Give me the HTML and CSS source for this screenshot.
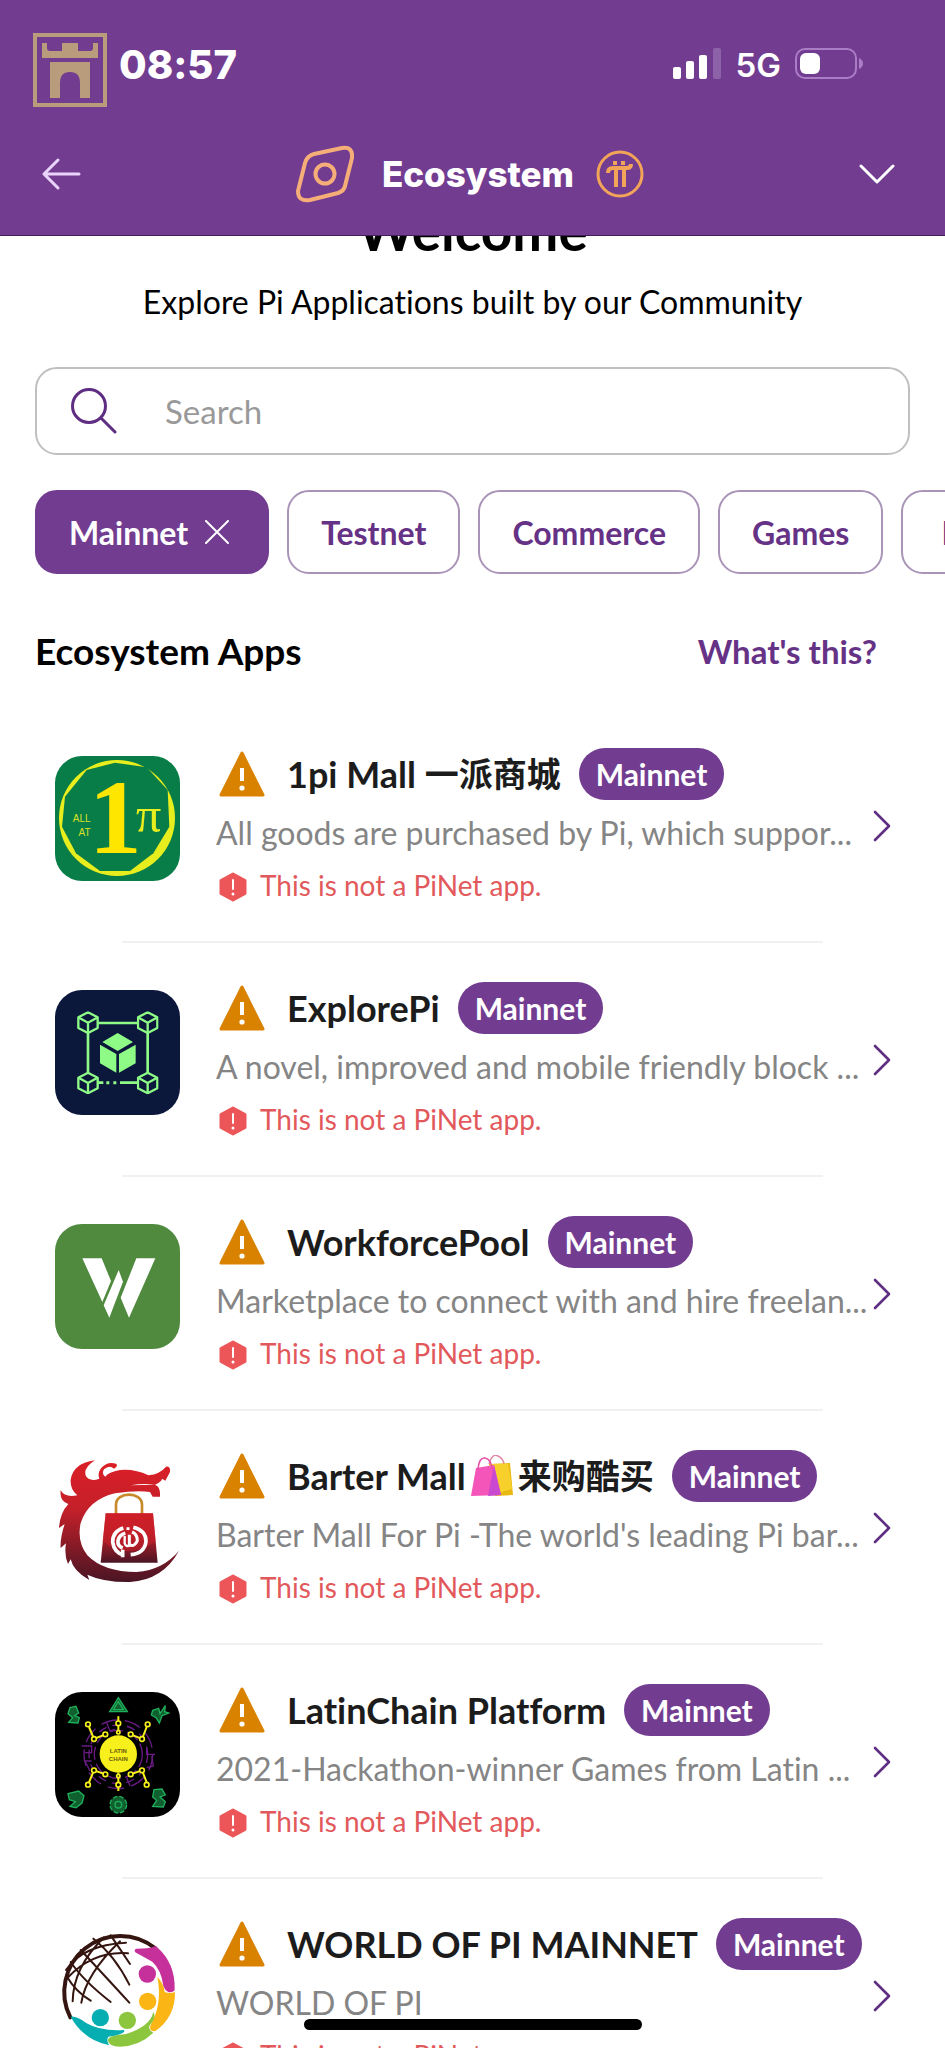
FILE: index.html
```html
<!DOCTYPE html>
<html lang="en">
<head>
  <meta charset="UTF-8">
  <meta name="viewport" content="width=device-width, initial-scale=1.0">
  <title>Ecosystem</title>
  <link rel="stylesheet" href="styles.css">
</head>
<body>
  <!-- shared icons -->
  <svg class="sprite" aria-hidden="true">
    <symbol id="warning" viewBox="0 0 46 46">
      <path d="M23 2 44 44H2Z" fill="#d98200" stroke="#d98200" stroke-width="3" stroke-linejoin="round"/>
      <path d="M21 17h4v13h-4z" fill="#fff"/>
      <circle cx="23" cy="37" r="2.6" fill="#fff"/>
    </symbol>
    <symbol id="alert" viewBox="0 0 28 30">
      <path d="M14 2 26 8.500V21.500L14 28 2 21.500V8.500Z" fill="#ec5659" stroke="#ec5659" stroke-width="3" stroke-linejoin="round"/>
      <path d="M14 8v9" stroke="#fff" stroke-width="2" stroke-linecap="round"/>
      <circle cx="14" cy="22" r="1.500" fill="#fff"/>
    </symbol>
    <symbol id="chevron" viewBox="0 0 18 32">
      <path d="M2 2 16 16 2 30" fill="none" stroke="#5f2d82" stroke-width="2.600" stroke-linecap="round" stroke-linejoin="round"/>
    </symbol>
    <symbol id="cube" viewBox="-32 -34 64 68">
      <path d="M0-31 29-16V16L0 31-29 16V-16Z" fill="#0c173c" stroke="#8dfb86" stroke-width="7" stroke-linejoin="round"/>
      <path d="M-27-15 0 0 27-15M0 0V29" fill="none" stroke="#8dfb86" stroke-width="7"/>
    </symbol>
  </svg>

  <header class="header">
    <div class="status">
      <svg class="castle" viewBox="0 0 74 74" fill="#b99c7b">
        <path d="M0 0h74v74H0zM4 4v66h66V4z" fill-rule="evenodd"/>
        <path d="M9 10h5v5q0 3 3 3h12v-8h16v8h12q3 0 3-3v-5h5v15H9z"/>
        <path d="M17 29h40v36H47V50q0-11-10-11T27 50v15H17z"/>
      </svg>
      <span class="clock">08:57</span>
      <svg class="signal" viewBox="0 0 48 32" fill="#fff">
        <rect x="0" y="19" width="8" height="12" rx="2"/>
        <rect x="13" y="13" width="8" height="18" rx="2"/>
        <rect x="26" y="7" width="8" height="24" rx="2"/>
        <rect x="40" y="0" width="8" height="31" rx="2" fill="#8d62a8"/>
      </svg>
      <span class="network">5G</span>
      <svg class="battery" viewBox="0 0 68 32">
        <rect x="1" y="1" width="60" height="29" rx="9" fill="none" stroke="#ab7dc6" stroke-width="2"/>
        <rect x="5" y="5" width="20" height="21" rx="6" fill="#fff"/>
        <path d="M64 10q4 2 4 5.500T64 21z" fill="#ab7dc6"/>
      </svg>
    </div>
    <nav class="nav">
      <button class="icon-button" aria-label="Back">
        <svg width="40" height="34" viewBox="0 0 40 34" fill="none" stroke="#ecd3fb" stroke-width="3" stroke-linecap="round" stroke-linejoin="round">
          <path d="M38 17H3M17 3 3 17l14 14"/>
        </svg>
      </button>
      <div class="brand">
        <svg width="58" height="58" viewBox="0 0 58 58" fill="none" stroke="#f6ae79" stroke-width="4">
          <path d="M18 9 46 3Q57 1 56 13L49 41Q48 46 42 48L14 55Q2 57 2 46L9 18Q11 11 18 9Z"/>
          <circle cx="29" cy="29" r="9.500"/>
        </svg>
        <h1 class="brand-name">Ecosystem</h1>
        <svg width="48" height="48" viewBox="0 0 48 48" fill="none" stroke="#f2a559" stroke-width="3">
          <circle cx="24" cy="24" r="22"/>
          <path d="M12 23q0-5 5-5h14q4 0 4-4M20 19v18M28 19v18" stroke-width="4"/>
          <path d="M17 13h4M25 13h4" stroke-width="4"/>
        </svg>
      </div>
      <button class="icon-button" aria-label="Menu">
        <svg width="36" height="22" viewBox="0 0 36 22" fill="none" stroke="#fff" stroke-width="3" stroke-linecap="round" stroke-linejoin="round">
          <path d="M2 3 18 19 34 3"/>
        </svg>
      </button>
    </nav>
  </header>

  <main class="main">
    <h2 class="welcome">Welcome</h2>
    <p class="intro">Explore Pi Applications built by our Community</p>

    <label class="search">
      <svg width="46" height="46" viewBox="0 0 46 46" fill="none" stroke="#5f2d82" stroke-width="3" stroke-linecap="round">
        <circle cx="18" cy="18" r="16.500"/>
        <path d="M30 30 44 44"/>
      </svg>
      <input type="text" placeholder="Search" aria-label="Search">
    </label>

    <div class="chips">
      <button class="chip active">Mainnet
        <svg width="24" height="24" viewBox="0 0 24 24" stroke="#fff" stroke-width="2" stroke-linecap="round"><path d="M1 1 23 23M23 1 1 23"/></svg>
      </button>
      <button class="chip">Testnet</button>
      <button class="chip">Commerce</button>
      <button class="chip">Games</button>
      <button class="chip chip-last">Education</button>
    </div>

    <div class="section-head">
      <h3>Ecosystem Apps</h3>
      <a href="#">What's this?</a>
    </div>

    <ul class="apps">
      <li class="app">
        <a class="app-link" href="#">
          <svg class="app-icon" viewBox="45 78 375 375">
            <path d="M45 78h375v375H45z" fill="#087d47"/>
            <circle cx="231" cy="264" r="174" fill="#e8ee1e"/>
            <path d="M225 98 320 112 383 180 388 290 340 370 270 423 180 423 108 370 66 290 75 200 140 120Z" fill="#087d47"/>
            <text class="logo-one" x="226" y="370">1</text>
            <text class="logo-pi" x="326" y="307">π</text>
            <text class="logo-small" x="152" y="275">ALL</text>
            <text class="logo-small" x="152" y="318">AT</text>
          </svg>
          <div class="app-body">
            <div class="app-title">
              <svg class="warning"><use href="#warning"/></svg>
              <span class="app-name">1pi Mall&nbsp;<span class="zh">一派商城</span></span>
              <span class="badge">Mainnet</span>
            </div>
            <p class="app-desc">All goods are purchased by Pi, which suppor...</p>
            <p class="app-note"><svg class="alert"><use href="#alert"/></svg>This is not a PiNet app.</p>
          </div>
          <svg class="chevron"><use href="#chevron"/></svg>
        </a>
      </li>

      <li class="app">
        <a class="app-link" href="#">
          <svg class="app-icon" viewBox="45 778 375 375">
            <path d="M45 778h375v375H45z" fill="#0c173c"/>
            <path d="M144 877H323V1056H240M190 1056H174M144 877V1056" fill="none" stroke="#8dfb86" stroke-width="8"/>
            <path d="M199 1056h9M220 1056h9" stroke="#8dfb86" stroke-width="9"/>
            <use href="#cube" x="111" y="842" width="66" height="68"/>
            <use href="#cube" x="290" y="842" width="66" height="68"/>
            <use href="#cube" x="111" y="1023" width="66" height="68"/>
            <use href="#cube" x="290" y="1023" width="66" height="68"/>
            <path d="M233 907 279 934 233 961 187 934ZM180 942 229 970V1026L180 998ZM287 942 237 970V1026L287 998Z" fill="#8dfb86"/>
          </svg>
          <div class="app-body">
            <div class="app-title">
              <svg class="warning"><use href="#warning"/></svg>
              <span class="app-name">ExplorePi</span>
              <span class="badge">Mainnet</span>
            </div>
            <p class="app-desc">A novel, improved and mobile friendly block ...</p>
            <p class="app-note"><svg class="alert"><use href="#alert"/></svg>This is not a PiNet app.</p>
          </div>
          <svg class="chevron"><use href="#chevron"/></svg>
        </a>
      </li>

      <li class="app">
        <a class="app-link" href="#">
          <svg class="app-icon" viewBox="45 69 375 375">
            <path d="M45 69h375v375H45z" fill="#4f8a3f"/>
            <path d="M127 172H185L213 240 187 303ZM236 207 249 242 208 350 191 313ZM289 172H346L267 350 242 290Z" fill="#fff"/>
          </svg>
          <div class="app-body">
            <div class="app-title">
              <svg class="warning"><use href="#warning"/></svg>
              <span class="app-name">WorkforcePool</span>
              <span class="badge">Mainnet</span>
            </div>
            <p class="app-desc">Marketplace to connect with and hire freelan...</p>
            <p class="app-note"><svg class="alert"><use href="#alert"/></svg>This is not a PiNet app.</p>
          </div>
          <svg class="chevron"><use href="#chevron"/></svg>
        </a>
      </li>

      <li class="app">
        <a class="app-link" href="#">
          <svg class="app-icon" viewBox="45 770 375 375">
            <defs>
              <linearGradient id="dragon" x1="0" y1="0" x2="0" y2="1">
                <stop offset="0" stop-color="#dc1f26"/>
                <stop offset=".4" stop-color="#c4202a"/>
                <stop offset="1" stop-color="#4a1524"/>
              </linearGradient>
            </defs>
            <path d="M165 777Q100 785 92 835Q90 865 112 882Q75 890 62 867Q58 900 85 908Q60 935 57 980L74 968Q60 1010 62 1040L78 1026Q72 1060 84 1088L92 1074Q100 1110 148 1136L142 1120Q190 1143 270 1142Q370 1135 417 1048Q370 1105 290 1112Q190 1112 142 1062Q110 1020 122 965Q145 895 225 876Q290 866 330 872L338 886L360 886Q362 855 345 850L272 852Q310 845 345 850Q366 840 366 832L376 838L390 812Q392 794 378 796Q360 818 325 822Q285 802 240 806Q205 812 196 826Q184 818 192 804Q208 790 222 802Q236 794 228 787Q200 780 182 802Q172 816 178 832Q150 842 138 825Q128 800 165 777Z" fill="url(#dragon)"/>
            <path d="M228 940V910C228 870 306 870 306 910V940" fill="none" stroke="#c98a2b" stroke-width="8"/>
            <path d="M197 936H339L353 1084H182Z" fill="url(#dragon)"/>
            <path d="M197 936H339L347 1020 Q260 1080 188 1020Z" fill="#c4202a" opacity=".6"/>
            <g fill="none" stroke="#fff" stroke-width="11">
              <path d="M250 980Q218 990 218 1022Q222 1054 252 1062M280 978Q318 988 318 1020Q314 1056 272 1060M248 1068V1045M248 1040Q232 1034 234 1018Q238 1000 256 996"/>
              <path d="M268 1000V1030Q284 1038 292 1018Q292 998 276 992M264 978V986" stroke-width="9"/>
              <path d="M254 1004V1026Q258 1038 270 1032" stroke-width="7"/>
            </g>
          </svg>
          <div class="app-body">
            <div class="app-title">
              <svg class="warning"><use href="#warning"/></svg>
              <span class="app-name">Barter Mall<svg class="bags" viewBox="0 0 44 42" role="img" aria-label="shopping bags">
                <path d="M19 9Q22-2 28 1T34 10" fill="none" stroke="#e08aa8" stroke-width="1.500"/>
                <path d="M19 9 40 8 43 40 25 41Z" fill="#e9b913"/>
                <path d="M20 9 38 9 40 20 42 34 28 38Z" fill="#f7d02c"/>
                <path d="M6 13 24 10 31 40 1 41Z" fill="#f355b8"/>
                <path d="M24 10 31 40 18 41Z" fill="#c94ad0"/>
                <path d="M8 15Q9 2 15 3T22 14" fill="none" stroke="#e64fa5" stroke-width="1.500"/>
              </svg><span class="zh">来购酷买</span></span>
              <span class="badge">Mainnet</span>
            </div>
            <p class="app-desc">Barter Mall For Pi -The world's leading Pi bar...</p>
            <p class="app-note"><svg class="alert"><use href="#alert"/></svg>This is not a PiNet app.</p>
          </div>
          <svg class="chevron"><use href="#chevron"/></svg>
        </a>
      </li>

      <li class="app">
        <a class="app-link" href="#">
          <svg class="app-icon" viewBox="45 63 375 375">
            <path d="M45 63h375v375H45z" fill="#000"/>
            <g fill="none" stroke="#6a1b86" stroke-width="4">
              <circle cx="235" cy="250" r="72" stroke-dasharray="40 12"/>
              <circle cx="235" cy="250" r="88" stroke-dasharray="26 18"/>
              <circle cx="235" cy="250" r="103" stroke-dasharray="50 22"/>
              <path d="M125 225h30v20h-20M345 250h-25v-20M200 155l10 25 15-5M270 345l-10-25M150 300l-15-30h20M320 290l20-5-5-30"/>
            </g>
            <g fill="none" stroke="#f7f01c" stroke-width="6">
              <path d="M235 136V190M235 305V360M147 168 162 204 196 190M320 168 306 204 272 190M147 334 162 298 196 310M320 334 306 298 272 310"/>
              <g fill="#000" stroke-width="5">
                <circle cx="235" cy="157" r="7"/><circle cx="235" cy="184" r="5"/><circle cx="144" cy="160" r="7"/><circle cx="162" cy="204" r="7"/><circle cx="196" cy="190" r="7"/>
                <circle cx="323" cy="160" r="7"/><circle cx="306" cy="204" r="7"/><circle cx="272" cy="190" r="7"/>
                <circle cx="235" cy="341" r="7"/><circle cx="235" cy="315" r="5"/><circle cx="144" cy="341" r="7"/><circle cx="162" cy="298" r="7"/><circle cx="196" cy="310" r="7"/>
                <circle cx="320" cy="341" r="7"/><circle cx="306" cy="298" r="7"/><circle cx="272" cy="310" r="7"/>
              </g>
            </g>
            <circle cx="235" cy="249" r="56" fill="#f7f01c"/>
            <text class="logo-latin" x="235" y="246">LATIN</text>
            <text class="logo-latin" x="235" y="271">CHAIN</text>
            <g fill="#10602f" stroke="#1fb05c" stroke-width="4">
              <path d="M235 80 262 122H209ZM235 92 250 116H220Z"/>
              <path d="M90 110 108 106 116 126 104 134 118 140 114 156 86 154 98 140 84 128Z"/>
              <path d="M338 118 356 112 360 128 376 104 374 122 386 126 366 134 358 156 348 140 334 132Z"/>
              <path d="M84 368 116 360 132 374 126 396 108 410 90 406 106 392 88 386Z"/>
              <path d="M342 356 366 354 376 372 360 378 376 392 370 408 338 406 350 388 338 378Z"/>
              <circle cx="235" cy="401" r="25" stroke-dasharray="14 6"/><circle cx="235" cy="401" r="10"/>
            </g>
          </svg>
          <div class="app-body">
            <div class="app-title">
              <svg class="warning"><use href="#warning"/></svg>
              <span class="app-name">LatinChain Platform</span>
              <span class="badge">Mainnet</span>
            </div>
            <p class="app-desc">2021-Hackathon-winner Games from Latin ...</p>
            <p class="app-note"><svg class="alert"><use href="#alert"/></svg>This is not a PiNet app.</p>
          </div>
          <svg class="chevron"><use href="#chevron"/></svg>
        </a>
      </li>

      <li class="app">
        <a class="app-link" href="#">
          <svg class="app-icon" viewBox="45 76 375 375">
            <g fill="none" stroke="#35150f" stroke-linecap="round">
              <path d="M91 350A168 168 0 0 1 346 143" stroke-width="12"/>
              <path d="M78 208Q128 132 258 126M82 232Q160 150 264 158M98 302Q100 200 192 110M124 306Q138 220 240 122" stroke-width="6"/>
              <path d="M212 104Q240 145 270 190M160 114Q225 165 268 252M122 148Q180 210 268 306M92 184Q130 240 212 304M78 224Q108 275 152 300" stroke-width="6"/>
            </g>
            <path d="M290 150Q325 150 346 143Q400 190 398 266Q385 275 376 255Q370 205 340 178Z" fill="#c5309b" stroke="#c5309b" stroke-width="12" stroke-linejoin="round"/>
            <path d="M352 228Q372 250 374 274Q390 280 405 274Q406 350 345 392Q325 392 332 372Q368 310 352 228Z" fill="#fbb615"/>
            <path d="M340 334Q330 378 258 400Q202 404 204 420Q206 436 240 438Q300 435 340 396Q320 384 332 370Q350 350 340 334Z" fill="#8cc63e"/>
            <path d="M92 348Q110 345 140 368Q180 392 252 388Q260 400 205 408Q198 420 208 434Q130 418 92 348Z" fill="#06aeb1"/>
            <circle cx="322" cy="220" r="26" fill="#c5309b"/>
            <circle cx="323" cy="302" r="26" fill="#fbb615"/>
            <circle cx="262" cy="359" r="26" fill="#8cc63e"/>
            <circle cx="181" cy="351" r="26" fill="#06aeb1"/>
          </svg>
          <div class="app-body">
            <div class="app-title">
              <svg class="warning"><use href="#warning"/></svg>
              <span class="app-name">WORLD OF PI MAINNET</span>
              <span class="badge">Mainnet</span>
            </div>
            <p class="app-desc">WORLD OF PI</p>
            <p class="app-note"><svg class="alert"><use href="#alert"/></svg>This is not a PiNet app.</p>
          </div>
          <svg class="chevron"><use href="#chevron"/></svg>
        </a>
      </li>
    </ul>
  </main>

  <div class="home-bar"></div>
</body>
</html>
```

FILE: styles.css
```css
* {
  box-sizing: border-box;
}
body {
  margin: 0;
  height: 100vh;
  display: flex;
  flex-direction: column;
  overflow: hidden;
  background-color: #fff;
  color: #000;
  font-family: Lato, "Noto Sans CJK SC", sans-serif;
  font-variant-ligatures: none;
}
h1, h2, h3, p, ul {
  margin: 0;
  padding: 0;
}
a {
  text-decoration: none;
}
button {
  font-family: inherit;
  cursor: pointer;
}
.sprite {
  position: absolute;
  width: 0;
  height: 0;
}

/* header */
.header {
  flex: none;
  z-index: 1;
  padding-top: 33px;
  background-color: #723c91;
  border-bottom: 1px solid #41205a;
  color: #fff;
  font-family: Inter, sans-serif;
}
.status {
  display: flex;
  align-items: center;
  height: 74px;
  padding: 0 82px 0 33px;
}
.castle {
  width: 74px;
  height: 74px;
}
.clock {
  margin-left: 12px;
  margin-right: auto;
  padding-bottom: 10px;
  font-size: 40px;
  line-height: 40px;
  font-weight: 800;
}
.signal {
  width: 48px;
  height: 32px;
  margin-bottom: 12px;
}
.network {
  margin: 0 14px 10px 15px;
  font-size: 33px;
  line-height: 40px;
  font-weight: 600;
}
.battery {
  width: 68px;
  height: 32px;
  margin-bottom: 12px;
}
.nav {
  display: flex;
  align-items: center;
  justify-content: space-between;
  height: 128px;
  padding: 6px 50px 0 41px;
}
.icon-button {
  display: flex;
  padding: 0;
  border: 0;
  background: none;
}
.brand {
  display: flex;
  align-items: center;
}
.brand-name {
  margin: 0 22px 0 28px;
  font-size: 35px;
  line-height: 40px;
  font-weight: 800;
}

/* content */
.main {
  flex: 1;
  min-height: 0;
  overflow: hidden;
}
.welcome {
  margin-top: -36px;
  font-size: 55px;
  line-height: 60px;
  font-weight: 700;
  text-align: center;
}
.intro {
  margin-top: 22px;
  font-size: 32px;
  line-height: 40px;
  text-align: center;
}
.search {
  display: flex;
  align-items: center;
  height: 88px;
  margin: 45px 35px 0;
  padding: 0 34px;
  border: 2px solid #c0c0c0;
  border-radius: 22px;
}
.search svg {
  flex: none;
}
.search input {
  flex: 1;
  margin-left: 48px;
  padding: 0;
  border: 0;
  outline: 0;
  background: none;
  font-family: inherit;
  font-size: 33px;
}
.search input::placeholder {
  color: #999;
}
.chips {
  display: flex;
  gap: 18px;
  margin-top: 35px;
  padding-left: 35px;
  overflow: hidden;
}
.chip {
  flex: none;
  display: flex;
  align-items: center;
  gap: 17px;
  height: 84px;
  padding: 0 32px;
  border: 2px solid #a994b8;
  border-radius: 22px;
  background-color: #fff;
  color: #663286;
  font-size: 32px;
  font-weight: 700;
}
.chip.active {
  padding-right: 38px;
  border-color: #723c91;
  background-color: #723c91;
  color: #fff;
}
.chip-last {
  padding-left: 38px;
}
.section-head {
  display: flex;
  align-items: center;
  justify-content: space-between;
  margin-top: 55px;
  padding: 0 68px 0 35px;
  line-height: 44px;
}
.section-head h3 {
  font-size: 37px;
  font-weight: 700;
}
.section-head a {
  color: #663286;
  font-size: 33px;
  font-weight: 700;
}

/* app list */
.apps {
  margin-top: 36px;
  list-style: none;
}
.app::after {
  content: "";
  display: block;
  height: 2px;
  margin: 0 122px;
  background-color: #f1f1f1;
}
.app-link {
  display: flex;
  align-items: center;
  padding: 38px 54px 36px 55px;
  color: #1c1c1c;
}
.app-icon {
  flex: none;
  align-self: flex-start;
  width: 125px;
  height: 125px;
  margin: 9px 36px 0 0;
  border-radius: 27px;
}
.app-body {
  flex: 1;
  min-width: 0;
  white-space: nowrap;
}
.app-title {
  display: flex;
  align-items: center;
  height: 54px;
}
.warning {
  flex: none;
  width: 46px;
  height: 46px;
  margin: 0 22px 0 3px;
}
.app-name {
  display: flex;
  align-items: center;
  font-size: 36px;
  line-height: 54px;
  font-weight: 700;
}
.zh {
  font-size: 34px;
}
.bags {
  width: 44px;
  height: 42px;
  margin: 0 4px;
}
.badge {
  margin-left: 18px;
  padding: 0 17px;
  border-radius: 26px;
  background-color: #723c91;
  color: #fff;
  font-size: 30px;
  line-height: 52px;
  font-weight: 700;
}
.app-desc {
  margin-top: 10px;
  color: #858585;
  font-size: 32px;
  line-height: 44px;
}
.app-note {
  display: flex;
  align-items: center;
  margin-top: 10px;
  color: #e2595c;
  font-size: 28px;
  line-height: 40px;
}
.alert {
  width: 28px;
  height: 30px;
  margin: 4px 13px 0 3px;
}
.chevron {
  flex: none;
  width: 18px;
  height: 32px;
}

/* lettering inside the logos */
.logo-one {
  fill: #ffe600;
  font: 700 318px "Liberation Serif", serif;
  text-anchor: middle;
}
.logo-pi {
  fill: #e8ee1e;
  font: 150px "Liberation Serif", serif;
  text-anchor: middle;
}
.logo-small {
  fill: #d8e12a;
  font: 30px "Liberation Sans Narrow", "Liberation Sans", sans-serif;
  text-anchor: end;
}
.logo-latin {
  fill: #6b5a10;
  font: 700 18px "Liberation Sans Narrow", "Liberation Sans", sans-serif;
  text-anchor: middle;
}

.home-bar {
  position: fixed;
  bottom: 18px;
  left: 50%;
  z-index: 2;
  width: 338px;
  height: 11px;
  margin-left: -169px;
  border-radius: 6px;
  background-color: #000;
}
```
